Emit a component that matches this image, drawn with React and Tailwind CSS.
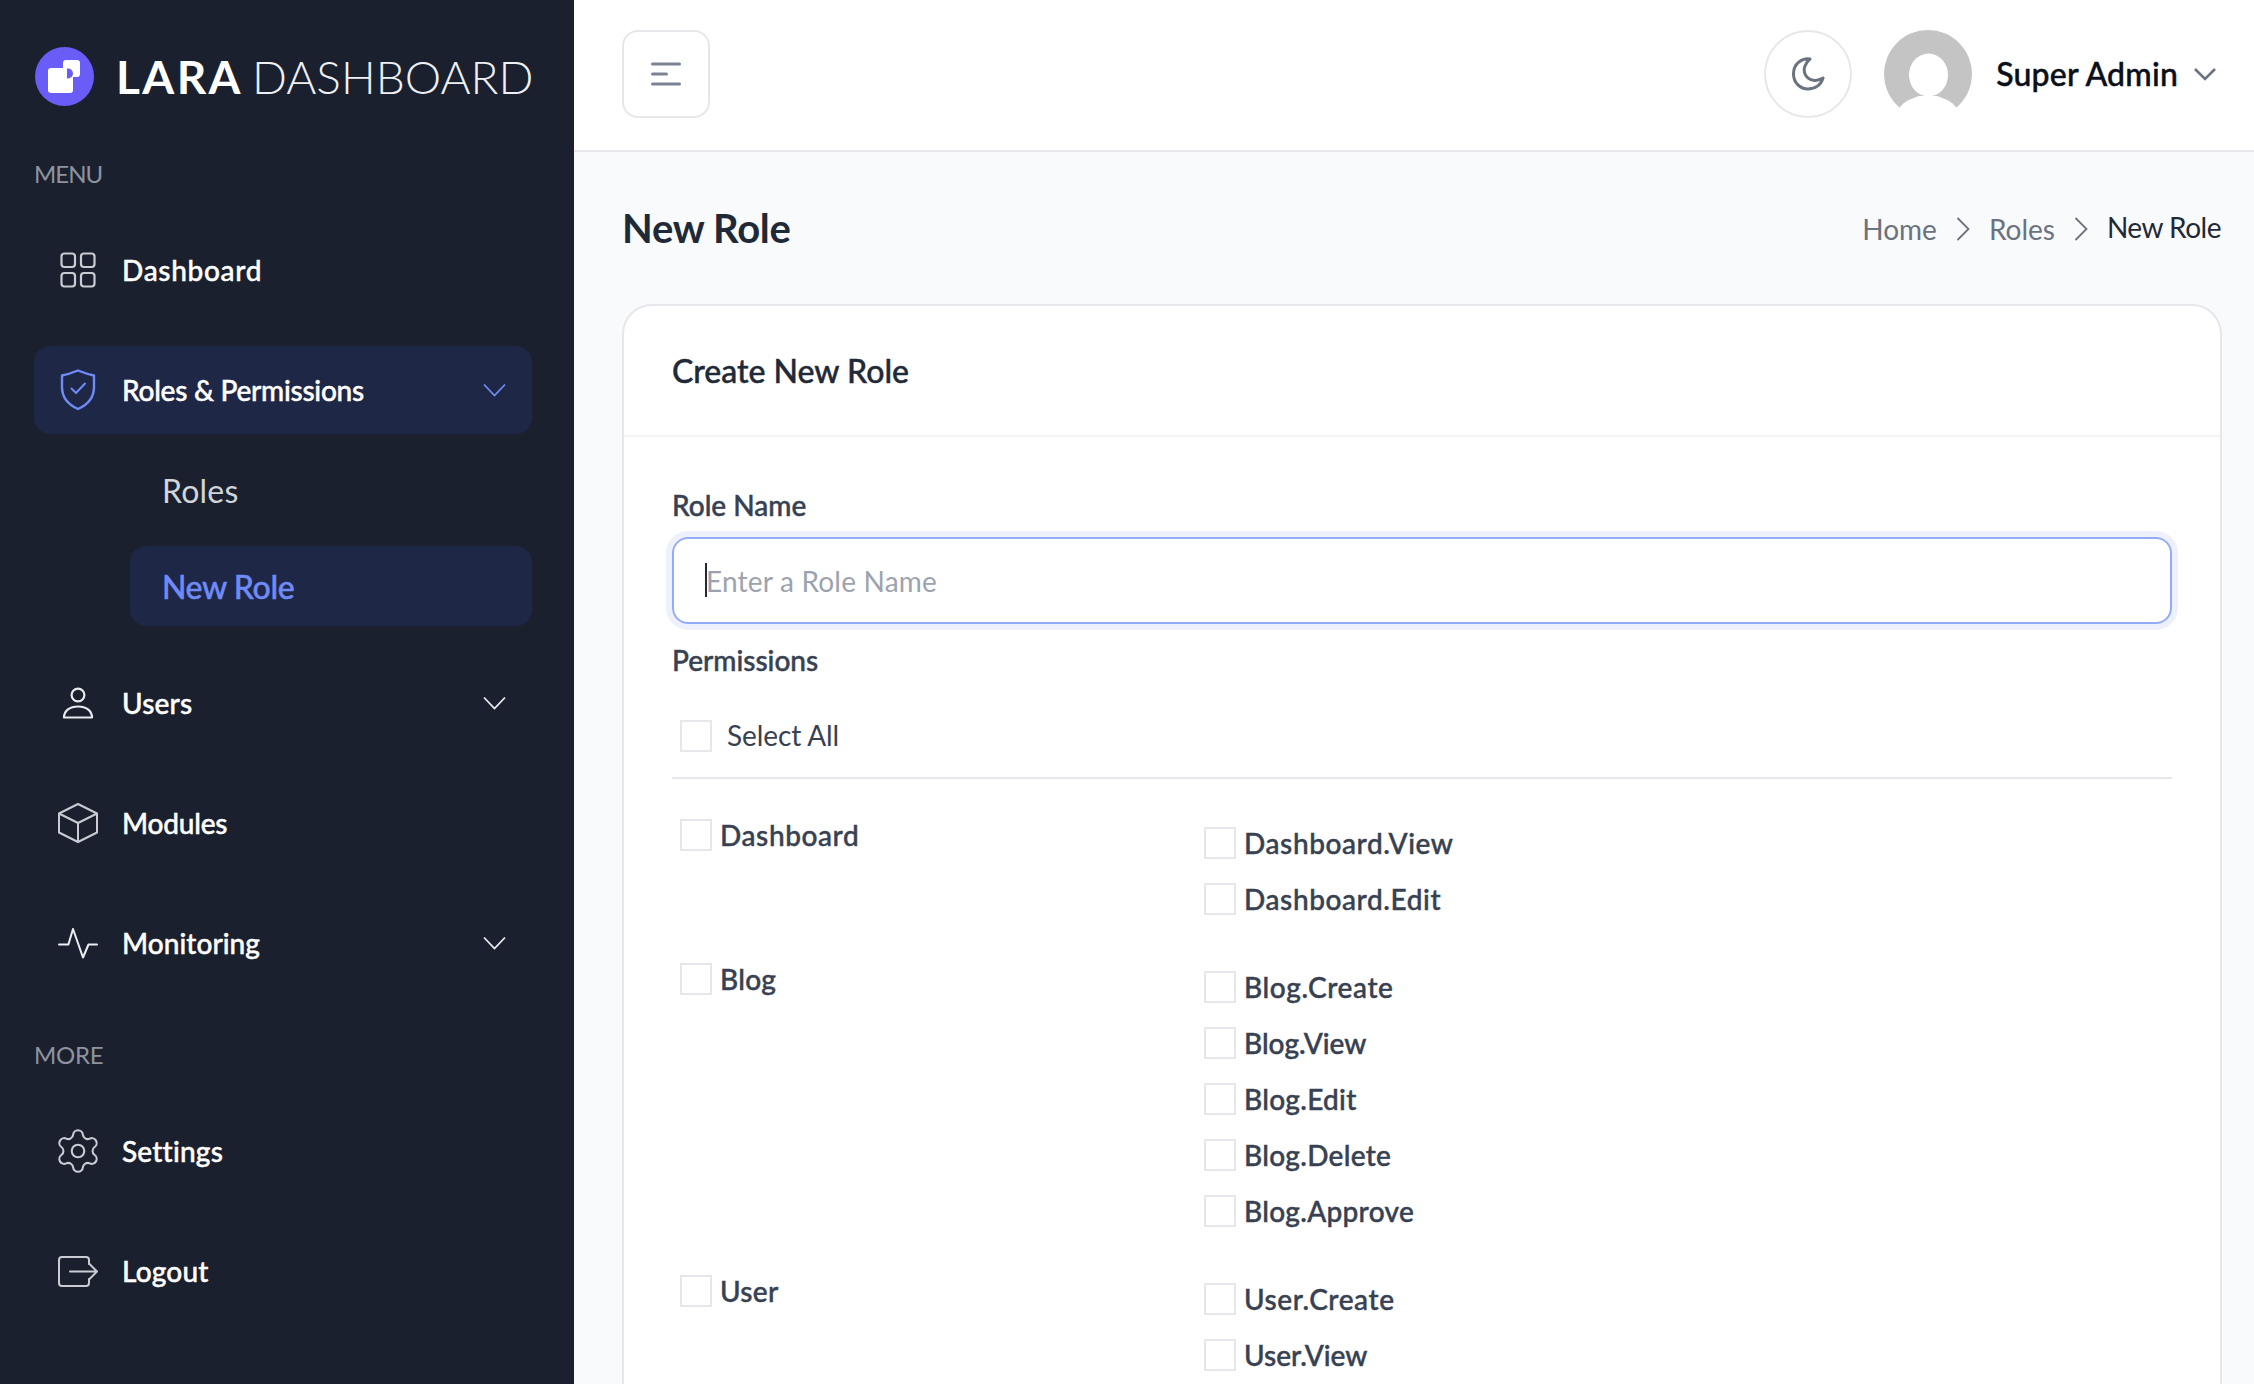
import React from "react";
import { Settings } from "lucide-react";

const med = "[-webkit-text-stroke:0.45px_currentColor]";

const Chevron = ({ className = "" }) => (
  <svg width="23" height="14" viewBox="0 0 23 14" fill="none" className={className}>
    <polyline points="1,1.5 11.5,12.5 22,1.5" stroke="currentColor" strokeWidth="1.8" />
  </svg>
);

const DashIcon = () => (
  <svg width="36" height="36" viewBox="0 0 36 36" fill="none" stroke="#c9ccd3" strokeWidth="2.2">
    <rect x="1.5" y="1.5" width="13.5" height="13.5" rx="3" />
    <rect x="21" y="1.5" width="13.5" height="13.5" rx="3" />
    <rect x="1.5" y="21" width="13.5" height="13.5" rx="3" />
    <rect x="21" y="21" width="13.5" height="13.5" rx="3" />
  </svg>
);
const ShieldIcon = () => (
  <svg width="36" height="42" viewBox="0 0 36 42" fill="none" stroke="#6f8bf7" strokeWidth="2.4" strokeLinejoin="round" strokeLinecap="round">
    <path d="M2 6.5C7 5.5 13 3.5 18 1.5C23 3.5 29 5.5 34 6.5V18C34 29 27 36 18 40C9 36 2 29 2 18V6.5Z" />
    <path d="M11.5 19.5L16 24L25 14.5" strokeWidth="2" />
  </svg>
);
const UserIcon = () => (
  <svg width="32" height="32" viewBox="0 0 32 32" fill="none" stroke="#e8eaee" strokeWidth="2.2">
    <circle cx="16" cy="8" r="6.4" />
    <path d="M2 30.5C2 23.5 8 19.5 16 19.5C24 19.5 30 23.5 30 30.5H2Z" strokeLinejoin="round" />
  </svg>
);
const BoxIcon = () => (
  <svg width="40" height="40" viewBox="0 0 40 40" fill="none" stroke="#c9ccd3" strokeWidth="2" strokeLinejoin="round">
    <path d="M20 1L39 10.5V29.5L20 39L1 29.5V10.5L20 1Z" />
    <path d="M1 10.5L20 20L39 10.5M20 20V39" />
  </svg>
);
const ActivityIcon = () => (
  <svg width="40" height="31" viewBox="0 0 40 31" fill="none" stroke="#eceef1" strokeWidth="2" strokeLinejoin="round" strokeLinecap="round">
    <polyline points="1,16.5 10.4,16.5 15,1 25,29.5 30.5,16.5 39,16.5" />
  </svg>
);
const LogoutIcon = () => (
  <svg width="40" height="31" viewBox="0 0 40 31" fill="none" stroke="#c9ccd3" strokeWidth="2" strokeLinecap="round" strokeLinejoin="round">
    <path d="M31 8V4C31 2.3 29.7 1 28 1H4C2.3 1 1 2.3 1 4V27C1 28.7 2.3 30 4 30H28C29.7 30 31 28.7 31 27V23" />
    <path d="M12 15.5H39M31.5 8L39 15.5L31.5 23" />
  </svg>
);

const Item = ({ icon, label, chevron, active, track = "tracking-[0.2px]" }) => (
  <div className={`h-[88px] flex items-center pl-[22px] pr-[26px] rounded-[16px] ${active ? "bg-[#1f2746]" : ""}`}>
    <div className="w-[44px] flex justify-center shrink-0">{icon}</div>
    <span className={`ml-[22px] text-[28px] font-medium text-white ${med} ${track}`}>{label}</span>
    {chevron && <Chevron className={`ml-auto ${active ? "text-[#6f8bf7]" : "text-[#eceef1]"}`} />}
  </div>
);

const Check = () => <span className="w-[32px] h-[32px] shrink-0 border-2 border-[#e5e7eb] bg-white"></span>;

const trackFor = (label) => {
  if (label.startsWith("Dashboard") || label.endsWith("Create")) return "tracking-[0.6px]";
  if (label.endsWith("View")) return "tracking-[0px]";
  return "tracking-[0.3px]";
};

const Perm = ({ label }) => (
  <div className="flex items-center h-[32px] gap-[8px]">
    <Check />
    <span className={`text-[28px] font-medium text-[#374151] leading-[32px] ${trackFor(label)} ${med}`}>{label}</span>
  </div>
);

const Group = ({ name, perms }) => (
  <div className="grid grid-cols-[532px_1fr]">
    <div className="pl-[8px]">
      <Perm label={name} />
    </div>
    <div className="pt-[8px] flex flex-col gap-[24px]">
      {perms.map((p) => (
        <Perm key={p} label={p} />
      ))}
    </div>
  </div>
);

export default function App() {
  return (
    <div className="h-[1384px] w-[2254px] flex overflow-hidden bg-[#f9fafb] font-['Lato','Noto_Sans',sans-serif]">
      <aside className="w-[574px] shrink-0 bg-[#1a202e] pl-[34px] pr-[42px] pt-[47px]">
        <div className="h-[59px] flex items-center">
          <svg width="59" height="59" viewBox="0 0 59 59" className="shrink-0 ml-[1px]">
            <circle cx="29.5" cy="29.5" r="29.5" fill="#6a5cf6" />
            <rect x="28" y="13" width="17" height="17" rx="3" fill="#fff" />
            <rect x="13" y="21" width="25" height="25" rx="3" fill="#fff" />
            <path d="M32 21.5h1a5 5 0 0 1 0 10h-1z" fill="#6a5cf6" />
          </svg>
          <span className="ml-[22px] text-[46px] leading-none font-bold text-white tracking-[2.4px]">LARA</span>
          <span className="ml-[9px] text-[46px] leading-none font-light text-[#eef0f3] whitespace-nowrap">DASHBOARD</span>
        </div>
        <div className="h-[34px] mt-[51px] mb-[35px] text-[24px] leading-[34px] text-[#8e939f] uppercase tracking-[-1px]">Menu</div>
        <div className="flex flex-col gap-[32px]">
          <Item icon={<DashIcon />} label="Dashboard" track="tracking-[0.7px]" />
          <div className="pb-[1px]">
            <Item icon={<ShieldIcon />} label="Roles & Permissions" chevron active track="tracking-[-0.25px]" />
            <div className="mt-[16px] ml-[96px] flex flex-col gap-[16px]">
              <div className="h-[80px] flex items-center pl-[32px] pt-[2px] text-[32px] text-[#d1d5db] tracking-[0.2px]">Roles</div>
              <div className={`h-[80px] flex items-center pl-[32px] pt-[2px] text-[32px] font-medium text-[#6f8bf7] bg-[#1f2746] rounded-[16px] tracking-[-0.4px] ${med}`}>New Role</div>
            </div>
          </div>
          <Item icon={<UserIcon />} label="Users" chevron />
          <Item icon={<BoxIcon />} label="Modules" track="tracking-[-0.2px]" />
          <Item icon={<ActivityIcon />} label="Monitoring" chevron track="tracking-[0.05px]" />
        </div>
        <div className="h-[34px] mt-[51px] mb-[35px] text-[24px] leading-[34px] text-[#8e939f] uppercase tracking-[-0.3px]">More</div>
        <div className="flex flex-col gap-[32px]">
          <Item icon={<Settings size={50} strokeWidth={1} color="#c9ccd3" className="shrink-0" />} label="Settings" />
          <Item icon={<LogoutIcon />} label="Logout" />
        </div>
      </aside>

      <div className="flex-1 min-w-0 flex flex-col">
        <header className="h-[152px] shrink-0 bg-white border-b-2 border-[#e5e7eb] pl-[48px] pr-[38px] pb-[2px] flex items-center">
          <button className="w-[88px] h-[88px] rounded-[16px] border-2 border-[#e5e7eb] flex items-center justify-center">
            <svg width="30" height="24" viewBox="0 0 30 24" fill="none" stroke="#7b8294" strokeWidth="3" strokeLinecap="round">
              <path d="M1.5 2H28.5M1.5 12H15.5M1.5 22H28.5" />
            </svg>
          </button>
          <button className="ml-auto w-[88px] h-[88px] rounded-full border-2 border-[#e5e7eb] flex items-center justify-center">
            <svg width="34" height="34" viewBox="0 0 34 34" fill="none" stroke="#6b7280" strokeWidth="3" strokeLinejoin="round">
              <path d="M19 2C11 1 2.5 6.5 2.5 17C2.5 26 9.5 32 17 32C24 32 30 28 32 21C26 25 18 24 14.5 18C11.5 12.5 14 6 19 2Z" />
            </svg>
          </button>
          <svg width="88" height="88" viewBox="0 0 88 88" className="ml-[32px] shrink-0">
            <circle cx="44" cy="44" r="44" fill="#c4c4c4" />
            <rect x="0" y="78" width="88" height="10" fill="#fff" />
            <path d="M15 78.5C20 71 27 69 35 66L53 66C61 69 68 71 73 78.5Z" fill="#fff" />
            <ellipse cx="44.5" cy="45" rx="19.5" ry="21.5" fill="#fff" />
          </svg>
          <span className={`ml-[24px] text-[32px] font-medium text-[#0b0f19] tracking-[0.2px] ${med}`}>Super Admin</span>
          <svg width="22" height="13" viewBox="0 0 22 13" fill="none" className="ml-[16px]" stroke="#6b7280" strokeWidth="2.6">
            <polyline points="1,1 11,11 21,1" />
          </svg>
        </header>

        <main className="flex-1 min-h-0 overflow-hidden pl-[48px] pr-[32px] pt-[52px]">
          <div className="h-[48px] mb-[52px] flex items-center justify-between">
            <h1 className="text-[40px] leading-[48px] font-bold text-[#1f2937] tracking-[-0.3px]">New Role</h1>
            <nav className="flex items-center text-[28px] pt-[2px] pr-[1px]">
              <span className="text-[#6b7280]">Home</span>
              <svg width="14" height="24" viewBox="0 0 14 24" fill="none" stroke="#6b7280" strokeWidth="1.8" className="mx-[19px]">
                <polyline points="1.5,1 12.5,12 1.5,23" />
              </svg>
              <span className="text-[#6b7280]">Roles</span>
              <svg width="14" height="24" viewBox="0 0 14 24" fill="none" stroke="#6b7280" strokeWidth="1.8" className="mx-[19px]">
                <polyline points="1.5,1 12.5,12 1.5,23" />
              </svg>
              <span className="text-[#1f2937] mb-[4px] tracking-[-0.5px]">New Role</span>
            </nav>
          </div>

          <section className="bg-white border-2 border-[#e5e7eb] rounded-[30px]">
            <div className="h-[131px] border-b-2 border-[#f3f4f6] px-[48px] flex items-center">
              <h2 className={`text-[32px] font-medium text-[#1f2937] ${med}`}>Create New Role</h2>
            </div>
            <div className="px-[48px] pt-[50px] pb-[60px]">
              <label className={`block text-[28px] leading-[36px] font-medium text-[#374151] ${med}`}>Role Name</label>
              <div className="relative mt-[14px]">
                <input
                  placeholder="Enter a Role Name"
                  className="w-full h-[87px] rounded-[16px] border-2 border-[#93acf7] pl-[32px] text-[28px] tracking-[0.2px] outline-none shadow-[0_0_0_6px_#eef0fc] placeholder:text-[#9ca3af]"
                />
                <span className="absolute left-[33px] top-[26px] w-[2px] h-[34px] bg-[#1f2937]"></span>
              </div>
              <div className={`mt-[18px] text-[28px] leading-[36px] font-medium text-[#374151] ${med}`}>Permissions</div>
              <div className="mt-[42px] pl-[8px] flex items-center gap-[15px] h-[32px]">
                <Check />
                <span className="text-[28px] text-[#374151] tracking-[-0.1px] mb-[2px]">Select All</span>
              </div>
              <div className="mt-[25px] h-[2px] bg-[#e5e7eb]"></div>
              <div className="mt-[40px] flex flex-col gap-[48px]">
                <Group name="Dashboard" perms={["Dashboard.View", "Dashboard.Edit"]} />
                <Group name="Blog" perms={["Blog.Create", "Blog.View", "Blog.Edit", "Blog.Delete", "Blog.Approve"]} />
                <Group name="User" perms={["User.Create", "User.View"]} />
              </div>
            </div>
          </section>
        </main>
      </div>
    </div>
  );
}
